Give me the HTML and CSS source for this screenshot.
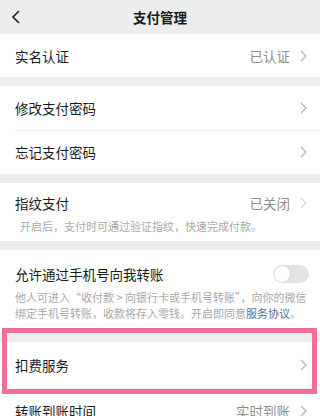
FILE: index.html
```html
<!DOCTYPE html>
<html lang="zh-CN">
<head>
    <meta charset="UTF-8">
    <title>支付管理</title>
    <link rel="stylesheet" href="styles.css">
</head>
<body>

    <div class="header">
        <div class="back">
            <svg width="10" height="14" viewBox="0 0 10 14"><path d="M8 1 L2 7 L8 13" fill="none" stroke="#222" stroke-width="1.6"/></svg>
        </div>
        <div class="header-title">支付管理</div>
        <div></div>
    </div>

    <div class="group">
        <div class="cell">
            <span class="cell-title">实名认证</span>
            <span class="cell-value">已认证</span>
            <svg class="arrow" width="7" height="12" viewBox="0 0 7 12"><path d="M1 1 L6 6 L1 11" fill="none" stroke="#b2b2b2" stroke-width="1.2"/></svg>
        </div>
    </div>

    <div class="group">
        <div class="cell cell-mid">
            <span class="cell-title">修改支付密码</span>
            <svg class="arrow" width="7" height="12" viewBox="0 0 7 12"><path d="M1 1 L6 6 L1 11" fill="none" stroke="#b2b2b2" stroke-width="1.2"/></svg>
        </div>
        <div class="cell cell-mid cell-line">
            <span class="cell-title">忘记支付密码</span>
            <svg class="arrow" width="7" height="12" viewBox="0 0 7 12"><path d="M1 1 L6 6 L1 11" fill="none" stroke="#b2b2b2" stroke-width="1.2"/></svg>
        </div>
    </div>

    <div class="group">
        <div class="block block-finger">
            <div class="block-head">
                <span class="cell-title">指纹支付</span>
                <span class="cell-value">已关闭</span>
                <svg class="arrow" width="7" height="12" viewBox="0 0 7 12"><path d="M1 1 L6 6 L1 11" fill="none" stroke="#d6d6d6" stroke-width="1.2"/></svg>
            </div>
            <div class="hint hint-indent">开启后，支付时可通过验证指纹，快速完成付款。</div>
        </div>
    </div>

    <div class="group">
        <div class="block block-phone">
            <div class="block-head">
                <span class="cell-title">允许通过手机号向我转账</span>
                <span class="switch"><span class="knob"></span></span>
            </div>
            <div class="hint">他人可进入“收付款 &gt; 向银行卡或手机号转账”，向你的微信绑定手机号转账，收款将存入零钱。开启即同意<a class="link">服务协议</a>。</div>
        </div>
    </div>

    <div class="group group-marked">
        <div class="cell cell-tall">
            <span class="cell-title">扣费服务</span>
            <svg class="arrow" width="7" height="12" viewBox="0 0 7 12"><path d="M1 1 L6 6 L1 11" fill="none" stroke="#b2b2b2" stroke-width="1.2"/></svg>
        </div>
        <div class="cell cell-tall cell-line">
            <span class="cell-title">转账到账时间</span>
            <span class="cell-value">实时到账</span>
            <svg class="arrow" width="7" height="12" viewBox="0 0 7 12"><path d="M1 1 L6 6 L1 11" fill="none" stroke="#b2b2b2" stroke-width="1.2"/></svg>
        </div>
    </div>

</body>
</html>
```

FILE: styles.css
```css
body {
    margin: 0;
    background: #ededed;
    font-family: "Noto Sans CJK SC", "Noto Sans", sans-serif;
    color: #1a1a1a;
    overflow: hidden;
}

.header {
    height: 34px;
    display: grid;
    grid-template-columns: 40px 1fr 40px;
    align-items: center;
}

.back {
    padding-left: 11px;
    display: flex;
    align-items: center;
}

.header-title {
    text-align: center;
    font-size: 13.5px;
    font-weight: 700;
}

.group {
    background: #fff;
    margin-bottom: 9px;
}

.cell {
    height: 43px;
    display: flex;
    align-items: center;
    padding: 0 13px 0 15px;
}

.cell-mid {
    height: 44px;
}

.cell-tall {
    height: 46px;
}

.cell-line {
    position: relative;
}

.cell-line::before {
    content: "";
    position: absolute;
    top: 0;
    left: 15px;
    right: 0;
    border-top: 1px solid #ececec;
}

.cell-title {
    font-size: 13.5px;
    flex: 1;
}

.cell-value {
    font-size: 13.5px;
    color: #8e8e8e;
    margin-right: 10px;
}

.block {
    padding: 0 13px 0 15px;
}

.block-head {
    display: flex;
    align-items: center;
    height: 20px;
}

.block-finger {
    padding-top: 10px;
    padding-bottom: 7px;
}

.block-phone {
    padding-top: 14px;
    padding-bottom: 11px;
}

.hint {
    font-size: 11px;
    line-height: 16px;
    color: #a8a8a8;
    margin-top: 5px;
}

.hint-indent {
    padding-left: 5px;
}

.link {
    color: #576b95;
}

.switch {
    width: 36px;
    height: 18px;
    border-radius: 9px;
    background: #e3e3e3;
    display: flex;
    align-items: center;
    padding: 0 1px;
    box-sizing: border-box;
    margin-right: -2px;
}

.knob {
    width: 16px;
    height: 16px;
    border-radius: 50%;
    background: #fff;
    box-shadow: 0 0 1px rgba(0, 0, 0, 0.25);
}

.group-marked {
    margin-top: 10px;
    position: relative;
}

.group-marked::after {
    content: "";
    position: absolute;
    top: -14px;
    left: 2px;
    right: 3px;
    height: 66px;
    border: 5px solid #ef6f98;
    box-sizing: border-box;
}
```
